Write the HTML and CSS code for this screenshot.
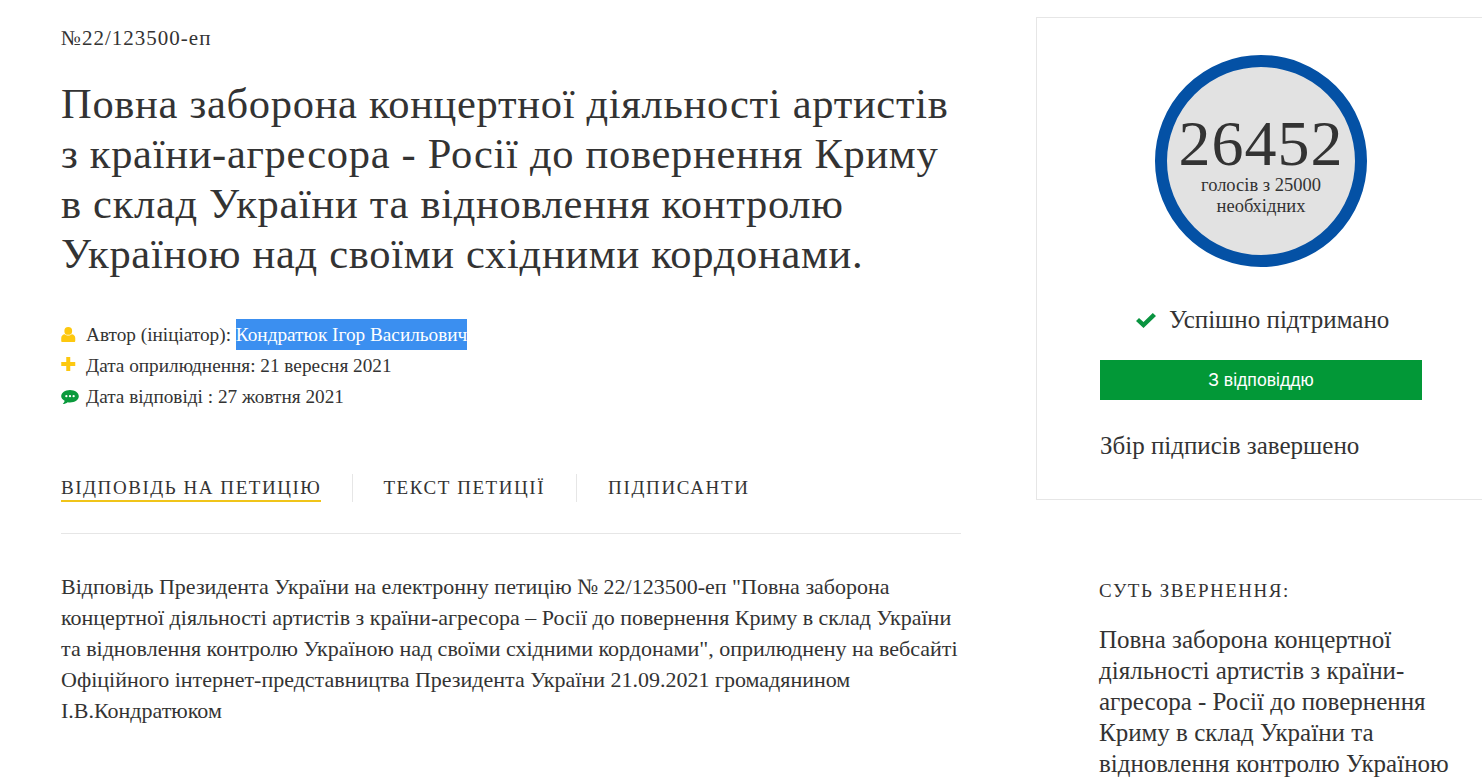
FILE: index.html
```html
<!DOCTYPE html>
<html lang="uk">
<head>
<meta charset="utf-8">
<title>Петиція №22/123500-еп</title>
<link rel="stylesheet" href="styles.css">
</head>
<body>
<div class="page">
  <main class="main">
    <div class="number">№22/123500-еп</div>
    <h1 class="title">Повна заборона концертної діяльності артистів<br>з країни-агресора - Росії до повернення Криму<br>в склад України та відновлення контролю<br>Україною над своїми східними кордонами.</h1>
    <ul class="meta">
      <li class="meta-row">
        <svg class="meta-icon icon-person" viewBox="0.8 0.6 14.4 15.400"><circle cx="8" cy="4.6" r="4" fill="#fdc80f"/><path d="M.8 15v-3c0-2.400 1.600-3.800 3.600-4 1 .9 2.200 1.300 3.600 1.300s2.600-.4 3.600-1.300c2 .2 3.600 1.600 3.600 4v3c0 .5-.4 1-1 1H1.800c-.6 0-1-.5-1-1z" fill="#fdc80f"/></svg>
        <span>Автор (ініціатор): <span class="selected">Кондратюк Ігор Васильович</span></span>
      </li>
      <li class="meta-row">
        <svg class="meta-icon icon-plus" viewBox="1 1 14 14"><path d="M6 1h4v5h5v4h-5v5H6v-5H1V6h5z" fill="#fdc80f"/></svg>
        <span>Дата оприлюднення: 21 вересня 2021</span>
      </li>
      <li class="meta-row">
        <svg class="meta-icon icon-chat" viewBox="0.5 1.500 17 13.500"><path d="M9 1.500c4.700 0 8.500 2.700 8.500 6s-3.800 6-8.500 6c-.8 0-1.500-.1-2.200-.2C5.500 14.300 3.800 15 2 15c.9-.9 1.600-2 1.800-3.200C1.800 10.700.5 9.200.5 7.500c0-3.300 3.800-6 8.500-6z" fill="#0a9a3c"/><circle cx="5.500" cy="7.500" r="1.100" fill="#fff"/><circle cx="9" cy="7.500" r="1.100" fill="#fff"/><circle cx="12.500" cy="7.500" r="1.100" fill="#fff"/></svg>
        <span>Дата відповіді : 27 жовтня 2021</span>
      </li>
    </ul>
    <nav class="tabs">
      <a class="tab tab-active">ВІДПОВІДЬ НА ПЕТИЦІЮ</a>
      <a class="tab">ТЕКСТ ПЕТИЦІЇ</a>
      <a class="tab">ПІДПИСАНТИ</a>
    </nav>
    <p class="answer">Відповідь Президента України на електронну петицію № 22/123500-еп "Повна заборона<br>концертної діяльності артистів з країни-агресора – Росії до повернення Криму в склад України<br>та відновлення контролю Україною над своїми східними кордонами", оприлюднену на вебсайті<br>Офіційного інтернет-представництва Президента України 21.09.2021 громадянином<br>І.В.Кондратюком</p>
  </main>
  <aside class="side">
    <section class="card">
      <div class="circle">
        <div class="count">26452</div>
        <div class="count-label">голосів з 25000<br>необхідних</div>
      </div>
      <div class="status">
        <svg class="check" viewBox="0 0 20 15"><path d="M0 8 3 5 7.500 9 16.800 0 20 3 7.500 15z" fill="#0a9440"/></svg>
        <span>Успішно підтримано</span>
      </div>
      <div class="button">З відповіддю</div>
      <div class="closed">Збір підписів завершено</div>
    </section>
    <h2 class="side-heading">СУТЬ ЗВЕРНЕННЯ:</h2>
    <p class="side-text">Повна заборона концертної<br>діяльності артистів з країни-<br>агресора - Росії до повернення<br>Криму в склад України та<br>відновлення контролю Україною</p>
  </aside>
</div>
</body>
</html>
```
FILE: styles.css
```css
* { box-sizing: border-box; }
html, body { margin: 0; height: 779px; overflow: hidden; background: #fff; }
body { font-family: "Liberation Serif", "Times New Roman", serif; color: #333; }
.page { display: flex; align-items: flex-start; padding-left: 61px; }
.main { width: 900px; flex: none; padding-top: 26px; }
.number { font-size: 21px; line-height: 24px; letter-spacing: 1px; }
.title { margin: 29px 0 0; font-size: 42.5px; line-height: 50px; font-weight: 400; white-space: nowrap; letter-spacing: .7px; }
.meta { list-style: none; margin: 40px 0 0; padding: 0; font-size: 19.25px; line-height: 31px; }
.meta-row { display: flex; align-items: center; height: 31px; }
.meta-icon { flex: none; margin-right: 10.5px; height: 15px; width: 14.5px; }
.icon-person { margin-bottom: 1px; }
.icon-plus { height: 14px; margin-bottom: 3px; }
.icon-chat { width: 18px; height: 14px; margin-right: 7px; }
.selected { display: inline-block; height: 31px; background: #3b8ff0; color: #fff; }
.tabs { display: flex; margin-top: 62px; padding-bottom: 31px; border-bottom: 1px solid #e6e6e6; font-size: 19px; letter-spacing: 1.55px; }
.tab { display: block; height: 28px; line-height: 28px; }
.tab + .tab { margin-left: 31px; padding-left: 30px; border-left: 1px solid #e6e6e6; }
.tab:last-child { padding-left: 31px; letter-spacing: 1.65px; }
.tab-active { border-bottom: 2px solid #f0c419; }
.answer { margin: 37px 0 0; font-size: 22px; line-height: 31px; white-space: nowrap; }
.side { margin-left: 75px; width: 500px; flex: none; padding-top: 17px; }
.card { height: 483px; border: 1px solid #e6e6e6; padding: 37px 0 0 63px; }
.circle { width: 212px; height: 212px; margin-left: 55px; border: 12px solid #0451a5; border-radius: 50%; background: #e2e2e2; text-align: center; padding-top: 46px; }
.count { font-size: 64px; line-height: 62px; letter-spacing: 1px; }
.count-label { font-size: 18.5px; line-height: 21px; }
.status { display: flex; align-items: center; margin: 38px 0 0 36px; font-size: 25px; line-height: 30px; }
.check { width: 20px; height: 15px; margin-right: 13px; flex: none; }
.button { width: 322px; height: 40px; margin-top: 25px; background: #029837; color: #fff; font: 17.6px/40px "Liberation Sans", Arial, sans-serif; text-align: center; }
.closed { margin-top: 31px; font-size: 25px; line-height: 30px; }
.side-heading { margin: 79px 0 0 63px; font-size: 19px; line-height: 24px; font-weight: 400; letter-spacing: 1.5px; }
.side-text { margin: 21px 0 0 63px; font-size: 25px; line-height: 31px; white-space: nowrap; }
```
